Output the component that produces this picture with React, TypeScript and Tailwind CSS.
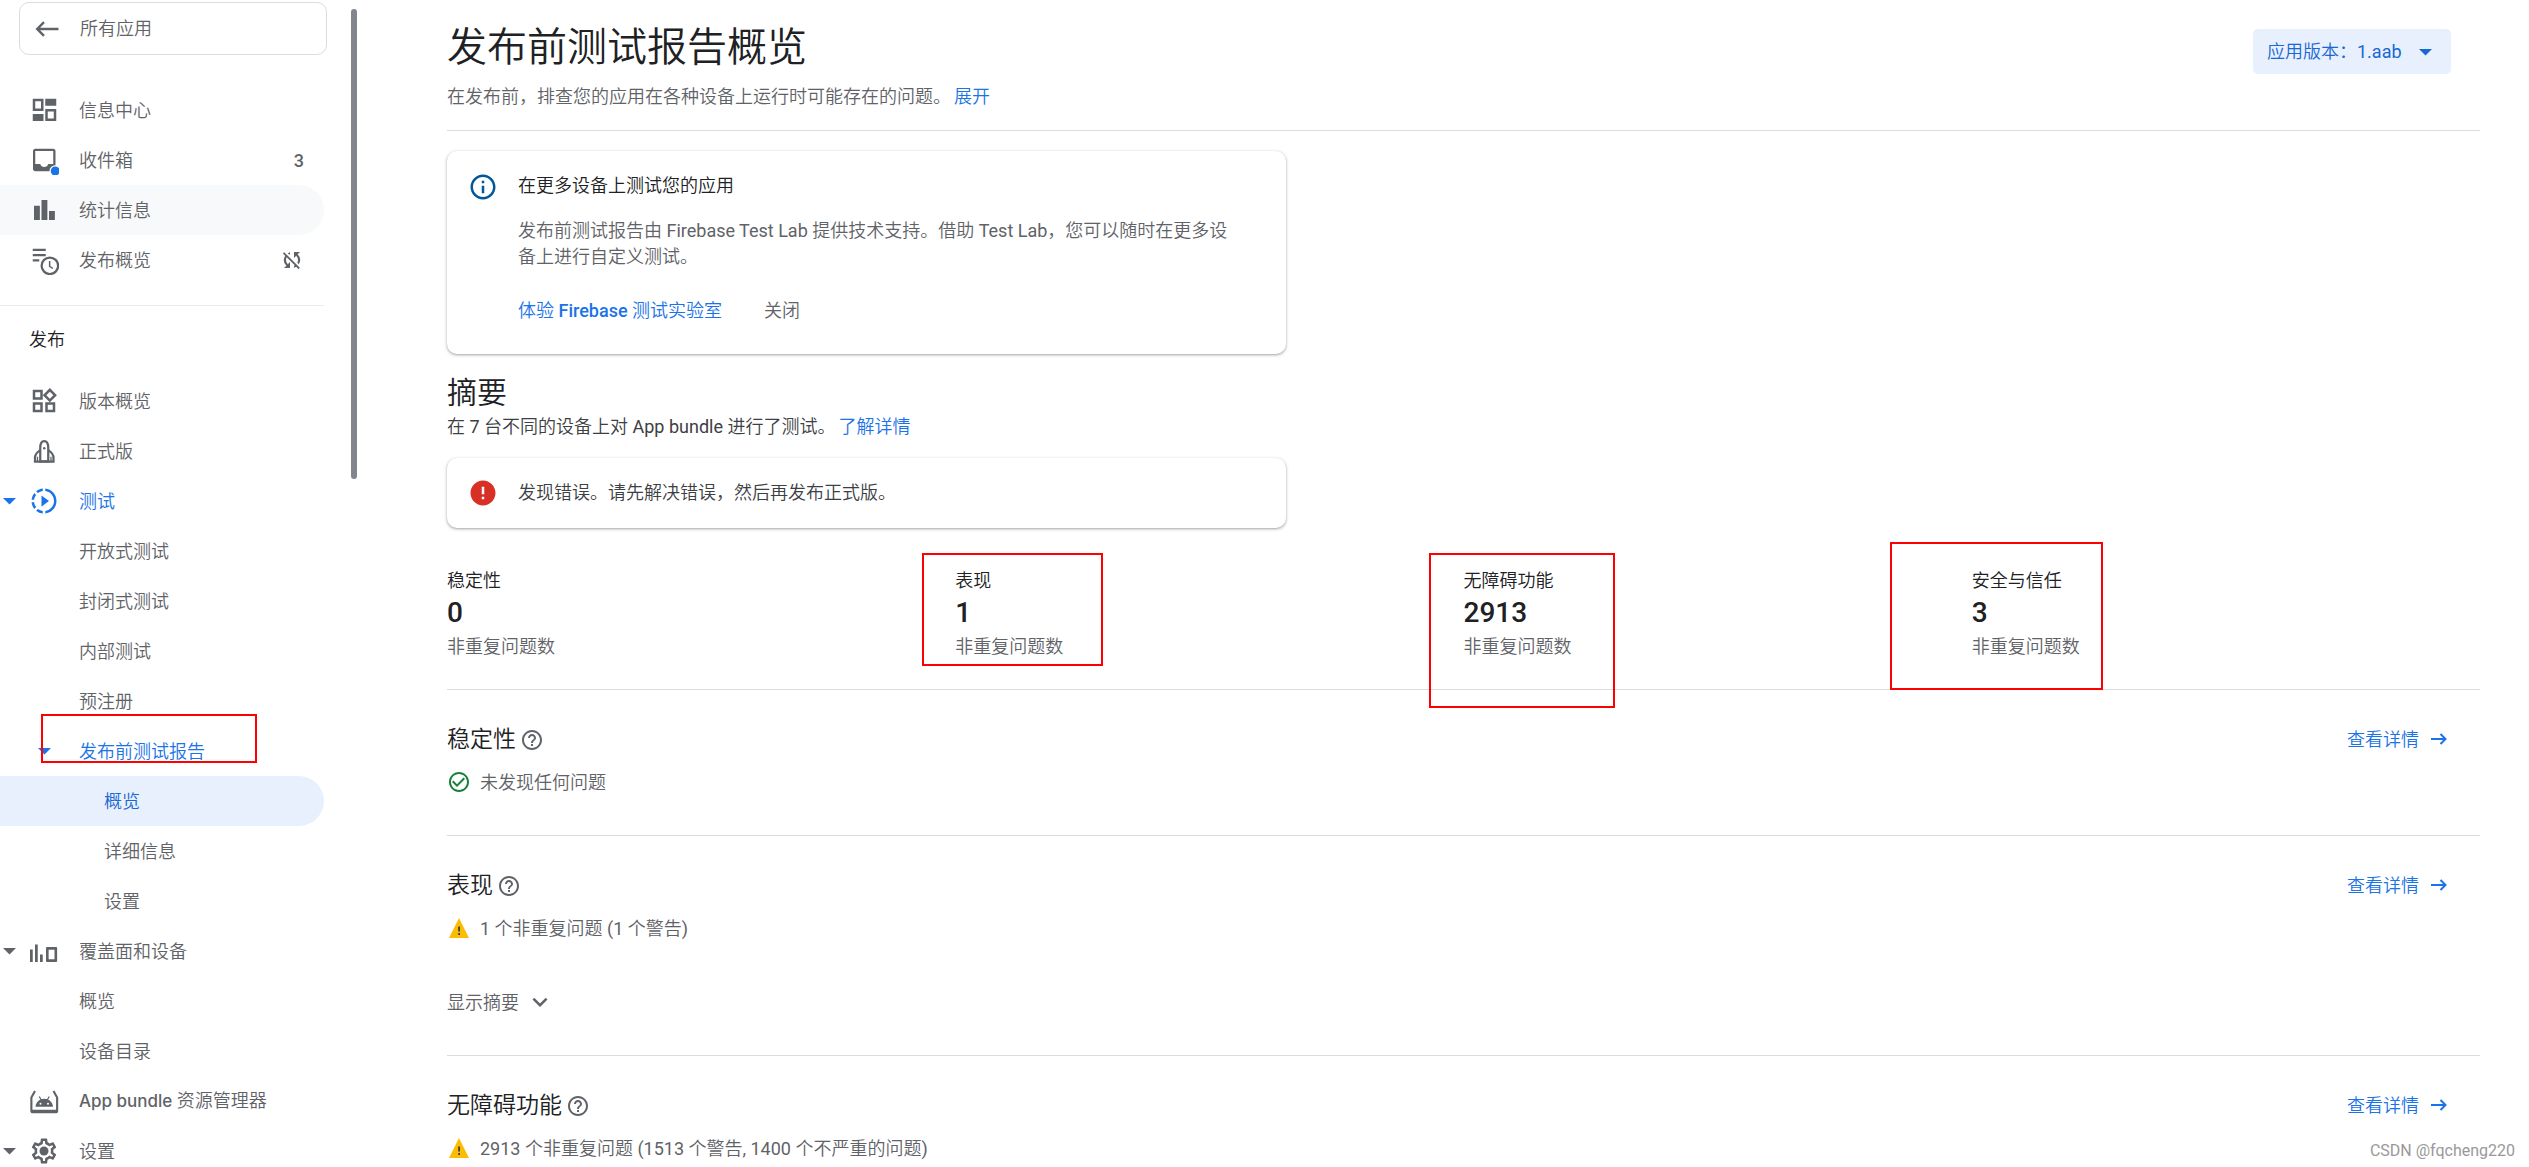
import type { ReactNode } from "react";
import {
  MdCheckCircleOutline,
  MdError,
  MdExpandMore,
  MdHelpOutline,
  MdOutlineInfo,
  MdOutlineWidgets,
  MdSlowMotionVideo,
  MdSyncDisabled,
} from "react-icons/md";

/* ---------- icons ---------- */

function Caret({ className }: { className?: string }) {
  return (
    <svg className={className} width="13" height="7" viewBox="0 0 13 7" fill="currentColor">
      <path d="M0 0h13L6.5 6.5z" />
    </svg>
  );
}

function BackIcon() {
  return (
    <svg width="24" height="16" viewBox="0 0 24 16" fill="none" stroke="currentColor" strokeWidth="2.4">
      <path d="M23.5 8H2.5M9 1.2 2.2 8 9 14.8" />
    </svg>
  );
}

function ForwardIcon() {
  return (
    <svg width="16" height="12" viewBox="0 0 16 12" fill="none" stroke="currentColor" strokeWidth="2">
      <path d="M0 6h14.5M9.5 1l5 5-5 5" />
    </svg>
  );
}

function DashboardIcon() {
  return (
    <svg width="30" height="30" viewBox="0 0 24 24" fill="currentColor">
      <path fillRule="evenodd" d="M3 3h8.6v9.8H3zM5 5v5.8h4.6V5zM13 3h8.8v5.6H13zM3 15.2h8.6v5.6H3zM13 11.2h8.8v9.6H13zM15 13.2v5.6h4.8v-5.6z" />
    </svg>
  );
}

function InboxIcon() {
  return (
    <svg width="30" height="30" viewBox="0 0 24 24" fill="currentColor">
      <path fillRule="evenodd" d="M5 3h14.4c1 0 1.8.8 1.8 1.8v14.4c0 1-.8 1.8-1.8 1.8H5c-1 0-1.8-.8-1.8-1.8V4.8C3.2 3.8 4 3 5 3zM5 4.8v10.4h4c.4 1.4 1.6 2.4 3.2 2.4s2.8-1 3.2-2.4h4V4.8z" />
      <circle cx="21" cy="20.8" r="4.6" fill="#fff" />
      <circle cx="21" cy="20.8" r="3.6" fill="#1a73e8" />
    </svg>
  );
}

function StatsIcon() {
  return (
    <svg width="30" height="30" viewBox="0 0 24 24" fill="currentColor">
      <path d="M4 8.5h4.7V20H4zM10 4h4.7v16H10zM16 12.8h4.7V20H16z" />
    </svg>
  );
}

function PublishIcon() {
  return (
    <svg width="30" height="30" viewBox="0 0 24 24" fill="none" stroke="currentColor" strokeWidth="1.8">
      <path d="M3 3.8h10.4M3 8h10.4M3 12.2h5.2" />
      <circle cx="16.7" cy="16.6" r="6.6" />
      <path d="M16.5 12.8v4.2l2.6 1.8" strokeWidth="1.2" />
    </svg>
  );
}

function RocketIcon() {
  return (
    <svg width="30" height="30" viewBox="0 0 24 24" fill="none" stroke="currentColor" strokeWidth="1.8">
      <path d="M9 20.2V9.500C9 6.200 10 4 12.200 4s3.200 2.200 3.200 5.500v10.700z" />
      <path d="M8.700 11.500C6.200 13.200 4.800 15.200 4.800 17.400v3h14.800v-3c0-2.200-1.400-4.200-3.900-5.900" />
      <path d="M6.800 20v-3.400M17.600 20v-3.400" strokeWidth="1" />
      <circle cx="12.2" cy="9.8" r="1" fill="currentColor" stroke="none" />
    </svg>
  );
}

function CoverageIcon() {
  return (
    <svg width="30" height="30" viewBox="0 0 24 24" fill="currentColor">
      <path d="M.8 10.700H3v10.100H.8zM4.800 6.700H7v14.100H4.800zM8.800 14.800H11v6H8.800z" />
      <path fillRule="evenodd" d="M14.600 8.800h6.900c.6 0 1 .4 1 1v10c0 .6-.4 1-1 1h-6.900c-.6 0-1-.4-1-1v-10c0-.6.4-1 1-1zM15.700 11v7.600h4.700V11z" />
    </svg>
  );
}

function BundleIcon() {
  return (
    <svg width="30" height="30" viewBox="0 0 24 24" fill="none" stroke="currentColor" strokeWidth="1.7">
      <path d="M4.800 4 1.900 9.200v10.600c0 .8.400 1.200 1.200 1.200h18.200c.8 0 1.200-.4 1.200-1.200V9.200L19.600 4" />
      <path d="M2 20h20.400" strokeWidth="2" />
      <path d="M8.200 8.400l1.600 2.800M16.200 8.400l-1.600 2.800" strokeWidth="1" />
      <path d="M5.200 16.600c.3-3.800 3.200-6.400 7-6.400s6.700 2.600 7 6.400z" fill="currentColor" stroke="none" />
      <circle cx="9.2" cy="14.2" r=".8" fill="#fff" stroke="none" />
      <circle cx="15.2" cy="14.2" r=".8" fill="#fff" stroke="none" />
    </svg>
  );
}

function GearIcon() {
  return (
    <svg width="30" height="30" viewBox="0 0 24 24" fill="currentColor">
      <path d="M19.430 12.980c.04-.32.07-.64.07-.98 0-.34-.03-.66-.07-.98l2.110-1.650c.19-.15.24-.42.12-.64l-2-3.460a.5.5 0 0 0-.61-.22l-2.490 1c-.52-.4-1.080-.73-1.690-.98l-.38-2.650A.488.488 0 0 0 14 2h-4c-.25 0-.46.180-.49.420l-.38 2.650c-.61.250-1.170.590-1.690.980l-2.490-1a.5.5 0 0 0-.61.220l-2 3.460c-.13.220-.07.490.12.640l2.110 1.650c-.04.320-.07.650-.07.980 0 .330.030.660.070.980l-2.110 1.650c-.19.150-.24.420-.12.640l2 3.460c.12.220.39.300.61.220l2.490-1c.52.400 1.080.730 1.690.980l.38 2.650c.03.240.24.420.49.420h4c.25 0 .46-.18.49-.42l.38-2.650c.61-.25 1.170-.59 1.690-.98l2.490 1c.23.080.49 0 .61-.22l2-3.460c.12-.22.07-.49-.12-.64l-2.110-1.650zm-1.980-1.710c.04.310.05.520.05.730 0 .21-.02.430-.05.730l-.14 1.130.89.700 1.080.840-.7 1.210-1.270-.51-1.040-.42-.9.680c-.43.320-.84.560-1.250.730l-1.060.430-.16 1.130-.2 1.350h-1.400l-.19-1.350-.16-1.130-1.060-.43c-.43-.18-.83-.41-1.230-.71l-.91-.7-1.060.430-1.270.510-.7-1.210 1.080-.84.89-.7-.14-1.130c-.03-.31-.05-.54-.05-.74s.02-.43.050-.73l.14-1.130-.89-.7-1.080-.84.7-1.210 1.270.510 1.040.420.900-.68c.43-.32.84-.56 1.250-.73l1.060-.43.16-1.130.2-1.350h1.390l.19 1.350.16 1.130 1.060.430c.43.180.83.410 1.230.710l.91.700 1.060-.43 1.270-.51.700 1.210-1.070.850-.89.700.14 1.130z" />
      <circle cx="12" cy="12" r="3.6" />
    </svg>
  );
}

function WarningIcon() {
  return (
    <svg width="24" height="24" viewBox="0 0 24 24">
      <path d="M2 22 12 2l10 20z" fill="#fbbc04" />
      <path d="M11.2 10.500h1.800v5h-1.800zM11.2 17h1.800v2h-1.800z" fill="#3c4043" />
    </svg>
  );
}

/* ---------- sidebar ---------- */

type Item = {
  label: ReactNode;
  icon?: ReactNode;
  extra?: ReactNode;
  caret?: boolean;
  level?: 1 | 2 | 3;
  state?: "hover" | "open" | "selected";
  marked?: boolean;
};

const topItems: Item[] = [
  { label: "信息中心", icon: <DashboardIcon /> },
  { label: "收件箱", icon: <InboxIcon />, extra: <span className="font-medium">3</span> },
  { label: "统计信息", icon: <StatsIcon />, state: "hover" },
  { label: "发布概览", icon: <PublishIcon />, extra: <MdSyncDisabled size={24} /> },
];

const releaseItems: Item[] = [
  { label: "版本概览", icon: <MdOutlineWidgets size={30} /> },
  { label: "正式版", icon: <RocketIcon /> },
  { label: "测试", icon: <MdSlowMotionVideo size={30} />, caret: true, state: "open" },
  { label: "开放式测试", level: 2 },
  { label: "封闭式测试", level: 2 },
  { label: "内部测试", level: 2 },
  { label: "预注册", level: 2 },
  { label: "发布前测试报告", level: 2, caret: true, state: "open", marked: true },
  { label: "概览", level: 3, state: "selected" },
  { label: "详细信息", level: 3 },
  { label: "设置", level: 3 },
  { label: "覆盖面和设备", icon: <CoverageIcon />, caret: true },
  { label: "概览", level: 2 },
  { label: "设备目录", level: 2 },
  {
    label: (
      <>
        <span className="font-[Inter] text-[17px] font-medium">App bundle</span> 资源管理器
      </>
    ),
    icon: <BundleIcon />,
  },
  { label: "设置", icon: <GearIcon />, caret: true },
];

function NavItem({ label, icon, extra, caret, level = 1, state, marked }: Item) {
  const tone =
    state === "selected"
      ? "bg-[#e8f0fe] text-[#1967d2]"
      : state === "open"
        ? "text-[#1a73e8]"
        : state === "hover"
          ? "bg-[#f8f9fa]"
          : "";
  return (
    <li className="relative">
      <a href="#" className={`flex h-[50px] items-center rounded-r-full pr-[20px] ${tone}`}>
        <span className="flex w-[29px] shrink-0 pl-[3px]">{caret && level === 1 && <Caret />}</span>
        <span className="flex w-[50px] shrink-0">
          {icon}
          {caret && level === 2 && <Caret className="ml-[9px]" />}
        </span>
        <span className={level === 3 ? "flex-1 pl-[25px]" : "flex-1"}>{label}</span>
        {extra}
      </a>
      {marked && <span className="absolute top-[-12px] left-[41px] h-[49px] w-[216px] border-2 border-[#ff0000]" />}
    </li>
  );
}

function Sidebar() {
  return (
    <aside className="flex w-[357px] shrink-0 items-start justify-between">
      <nav className="w-[324px] text-[#5f6368]">
        <a
          href="#"
          className="mt-[2px] ml-[19px] flex h-[53px] w-[308px] items-center gap-[21px] rounded-[10px] border border-[#dadce0] pl-[15px]"
        >
          <BackIcon />
          所有应用
        </a>
        <ul className="mt-[30px]">
          {topItems.map((item, i) => (
            <NavItem key={i} {...item} />
          ))}
        </ul>
        <div className="mt-[20px] border-t border-[#e8eaed]" />
        <h2 className="mt-[22px] pl-[29px] leading-[24px] text-[#202124]">发布</h2>
        <ul className="mt-[24px]">
          {releaseItems.map((item, i) => (
            <NavItem key={i} {...item} />
          ))}
        </ul>
      </nav>
      <div className="mt-[9px] h-[470px] w-[6px] rounded-full bg-[#80868b]" />
    </aside>
  );
}

/* ---------- main ---------- */

const stats = [
  { label: "稳定性", value: 0 },
  { label: "表现", value: 1, mark: "top-[-16px] left-[-33px] h-[113px] w-[181px]" },
  { label: "无障碍功能", value: 2913, mark: "top-[-16px] left-[-35px] h-[155px] w-[186px]" },
  { label: "安全与信任", value: 3, mark: "top-[-27px] left-[-82px] h-[148px] w-[213px]" },
];

function Card({ icon, children }: { icon: ReactNode; children: ReactNode }) {
  return (
    <div className="flex max-w-[839px] gap-[20px] rounded-[10px] pr-[48px] pl-[21px] shadow-[0_1px_2px_rgba(60,64,67,0.3),0_1px_3px_1px_rgba(60,64,67,0.15)]">
      {icon}
      <div>{children}</div>
    </div>
  );
}

function Section({
  title,
  icon,
  text,
  expandable,
}: {
  title: string;
  icon: ReactNode;
  text: string;
  expandable?: boolean;
}) {
  return (
    <section className="flex items-start justify-between border-b border-[#dadce0] pt-[34px] pr-[33px] pb-[41px]">
      <div>
        <h3 className="flex items-center gap-[4px] text-[23px] leading-[32px] text-[#202124]">
          {title}
          <MdHelpOutline size={24} className="text-[#5f6368]" />
        </h3>
        <p className="mt-[14px] flex h-[24px] items-center gap-[9px] text-[#5f6368]">
          {icon}
          {text}
        </p>
        {expandable && (
          <button className="mt-[50px] flex h-[24px] items-center gap-[6px] text-[#5f6368]">
            显示摘要
            <MdExpandMore size={30} />
          </button>
        )}
      </div>
      <a href="#" className="flex h-[30px] items-center gap-[12px] text-[#1a73e8]">
        查看详情
        <ForwardIcon />
      </a>
    </section>
  );
}

export default function App() {
  return (
    <div className="relative flex h-screen overflow-hidden bg-white font-[Roboto,'Noto_Sans_CJK_SC_DemiLight','Noto_Sans_CJK_SC',sans-serif] text-[18px]">
      <Sidebar />
      <main className="min-w-0 flex-1 pr-[49px] pl-[90px]">
        <header className="flex items-start justify-between border-b border-[#dadce0] pt-[23px] pb-[21px]">
          <div>
            <h1 className="text-[40px] leading-[50px] text-[#202124]">发布前测试报告概览</h1>
            <p className="mt-[11px] leading-[25px] text-[#5f6368]">
              在发布前，排查您的应用在各种设备上运行时可能存在的问题。
              <a href="#" className="ml-[3px] text-[#1a73e8]">
                展开
              </a>
            </p>
          </div>
          <div className="relative mt-[6px] mr-[29px] text-[#1967d2]">
            <select
              aria-label="应用版本"
              className="h-[45px] w-[198px] appearance-none rounded-[5px] bg-[#e8f0fe] pl-[14px]"
            >
              <option>应用版本：1.aab</option>
            </select>
            <Caret className="pointer-events-none absolute top-[20px] right-[19px]" />
          </div>
        </header>

        <div className="mt-[20px]">
          <Card icon={<MdOutlineInfo size={30} className="mt-[21px] shrink-0 text-[#01579b]" />}>
            <h2 className="mt-[23px] leading-[24px] text-[#202124]">在更多设备上测试您的应用</h2>
            <p className="mt-[20px] leading-[26px] text-[#5f6368]">
              发布前测试报告由 Firebase Test Lab 提供技术支持。借助 Test Lab，您可以随时在更多设备上进行自定义测试。
            </p>
            <div className="mt-[29px] mb-[31px] flex gap-[42px] leading-[24px]">
              <a href="#" className="text-[#1a73e8]">
                体验 <span className="font-medium">Firebase</span> 测试实验室
              </a>
              <button className="text-[#5f6368]">关闭</button>
            </div>
          </Card>
        </div>

        <h2 className="mt-[21px] text-[30px] leading-[36px] text-[#202124]">摘要</h2>
        <p className="mt-[3px] mb-[19px] leading-[25px] text-[#3c4043]">
          在 7 台不同的设备上对 App bundle 进行了测试。
          <a href="#" className="ml-[3px] text-[#1a73e8]">
            了解详情
          </a>
        </p>
        <Card icon={<MdError size={30} className="mt-[20px] shrink-0 text-[#d93025]" />}>
          <p className="my-[23px] leading-[24px] text-[#3c4043]">发现错误。请先解决错误，然后再发布正式版。</p>
        </Card>

        <div className="mt-[41px] grid grid-cols-4 border-b border-[#dadce0] pb-[30px]">
          {stats.map((s) => (
            <div key={s.label} className="relative">
              <h3 className="leading-[24px] text-[#202124]">{s.label}</h3>
              <p className="mt-[2px] text-[28px] leading-[36px] font-medium text-[#202124]">{s.value}</p>
              <p className="mt-[4px] leading-[24px] text-[#5f6368]">非重复问题数</p>
              {s.mark && <span className={`absolute border-2 border-[#ff0000] ${s.mark}`} />}
            </div>
          ))}
        </div>

        <Section
          title="稳定性"
          icon={<MdCheckCircleOutline size={24} className="text-[#188038]" />}
          text="未发现任何问题"
        />
        <Section title="表现" icon={<WarningIcon />} text="1 个非重复问题 (1 个警告)" expandable />
        <Section
          title="无障碍功能"
          icon={<WarningIcon />}
          text="2913 个非重复问题 (1513 个警告, 1400 个不严重的问题)"
        />
      </main>
      <span className="absolute right-[14px] bottom-[4px] text-[16px] leading-[24px] text-[#999999]">
        CSDN @fqcheng220
      </span>
    </div>
  );
}
